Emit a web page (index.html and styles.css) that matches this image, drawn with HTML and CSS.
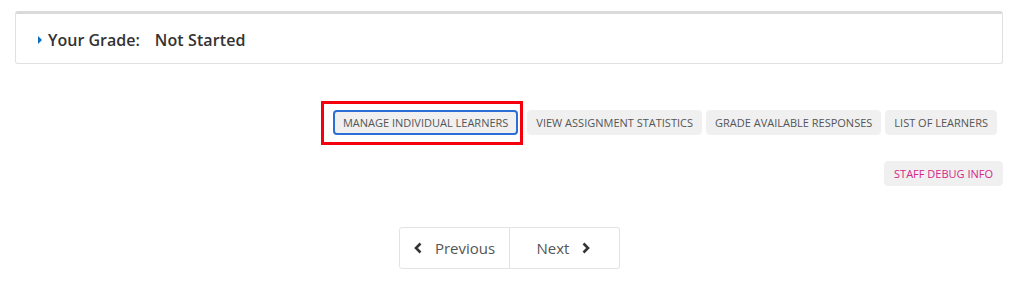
FILE: index.html
```html
<!DOCTYPE html>
<html>
  <head>
    <meta charset="utf-8">
    <title>Assessment</title>
    <link rel="stylesheet" href="styles.css">
  </head>
  <body>
    <div class="page">
      <div class="grade-box">
        <span class="grade-toggle"></span>
        <span class="grade-label">Your Grade:</span>
        <span class="grade-value">Not Started</span>
      </div>

      <div class="staff-tools">
        <div class="staff-row">
          <button class="staff-btn is-focused">Manage Individual Learners</button>
          <button class="staff-btn">View Assignment Statistics</button>
          <button class="staff-btn">Grade Available Responses</button>
          <button class="staff-btn">List of Learners</button>
        </div>
        <div class="staff-row debug-row">
          <button class="staff-btn debug">Staff Debug Info</button>
        </div>
      </div>

      <div class="sequence-nav">
        <button class="nav-btn prev">
          <svg width="10" height="12" viewBox="0 0 10 12"><path d="M7.5 1.5 L3 6 L7.5 10.5" fill="none" stroke="#333" stroke-width="2.6"/></svg>
          Previous
        </button>
        <button class="nav-btn next">
          Next
          <svg width="10" height="12" viewBox="0 0 10 12"><path d="M2.5 1.5 L7 6 L2.5 10.5" fill="none" stroke="#333" stroke-width="2.6"/></svg>
        </button>
      </div>
    </div>
  </body>
</html>
```

FILE: styles.css
```css
* {
    font-family: "Open Sans", "Liberation Sans", sans-serif;
    box-sizing: border-box;
}

body {
    margin: 0;
    background: #fff;
}

.page {
    padding: 11px 21px 0 15px;
}

.grade-box {
    display: flex;
    align-items: center;
    height: 53px;
    padding: 3px 0 0 22px;
    border: 1px solid #e0e0e0;
    border-top: 3px solid #dadada;
    border-radius: 3px;
    color: #333;
}
.grade-toggle {
    width: 0;
    height: 0;
    border-top: 4px solid transparent;
    border-bottom: 4px solid transparent;
    border-left: 4px solid #0a6ebd;
    margin-right: 6px;
}
.grade-label {
    font-size: 16px;
    font-weight: 600;
    margin-right: 15px;
}
.grade-value {
    font-size: 16px;
    font-weight: 600;
    letter-spacing: 0.1px;
}

.staff-tools {
    margin-top: 46px;
}
.staff-row {
    display: flex;
    justify-content: flex-end;
    gap: 4px;
    padding-right: 6px;
}
.debug-row {
    margin-top: 26px;
    padding-right: 0;
}
.staff-btn {
    height: 25px;
    padding: 0 8px;
    border: 1px solid #f0f0f0;
    border-radius: 4px;
    background: #f0f0f0;
    color: #555;
    font-size: 11px;
    text-transform: uppercase;
    letter-spacing: 0;
}
.staff-btn.is-focused {
    position: relative;
    padding: 0 8px;
    border: 2px solid #2a6fd6;
    margin-right: 5px;
}
/* red annotation frame around the focused button */
.staff-btn.is-focused::after {
    content: "";
    position: absolute;
    left: -14px;
    right: -7px;
    top: -11px;
    bottom: -12px;
    border: 3px solid #f5000d;
}
.staff-btn.debug {
    color: #d6268a;
    padding: 0 9px;
}

.sequence-nav {
    display: flex;
    justify-content: center;
    margin-top: 41px;
}
.nav-btn {
    display: flex;
    align-items: center;
    gap: 12px;
    height: 42px;
    width: 110px;
    justify-content: center;
    background: #fff;
    border: 1px solid #e3e3e3;
    color: #555;
    font-size: 15px;
}
.nav-btn.prev {
    border-radius: 3px 0 0 3px;
    width: 111px;
}
.nav-btn.next {
    border-left: none;
    border-radius: 0 3px 3px 0;
}
```
